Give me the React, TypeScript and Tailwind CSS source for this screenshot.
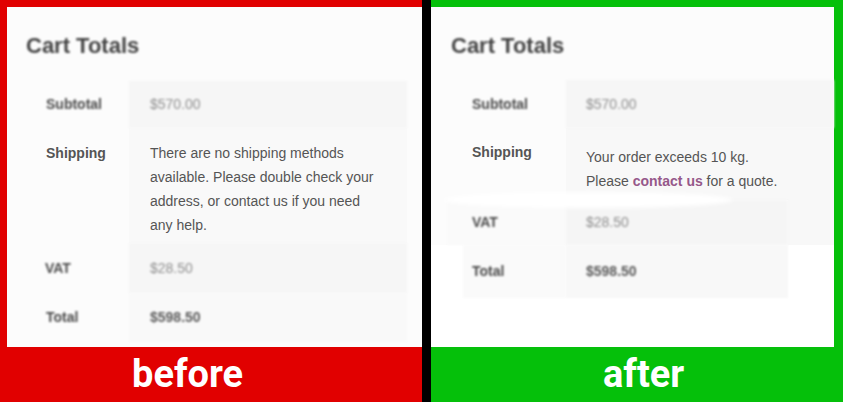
import React from "react";

const sans = { fontFamily: '"Liberation Sans", Arial, sans-serif' };
const robo = { fontFamily: 'Roboto, "Open Sans", sans-serif' };

function Heading({ pl }: { pl: string }) {
  return (
    <div className={`${pl} pt-[25px] h-[53px] text-[22px] leading-[28px] font-bold text-[#444] blur-[1px]`}>
      Cart Totals
    </div>
  );
}

export default function App() {
  return (
    <div className="flex w-[843px] h-[402px] overflow-hidden" style={sans}>
      {/* BEFORE */}
      <div className="w-[422px] bg-[#e10000] flex flex-col">
        <div className="ml-[7px] mt-[7px] h-[340px] w-[415px] bg-[#fcfcfc] flex flex-col">
          <Heading pl="pl-[19px]" />
          <div className="mt-[21px] ml-[27px] flex flex-col text-[14px]">
            <div className="flex h-[47px]">
              <div className="w-[95px] pl-[12px] flex items-center font-bold text-[#4a4a4a] blur-[1px]">Subtotal</div>
              <div className="w-[278px] pl-[21px] flex items-center bg-[#f6f6f6] text-[#8f8f8f] blur-[1px]">$570.00</div>
            </div>
            <div className="flex h-[115px]">
              <div className="w-[95px] pl-[12px] pt-[13px] leading-[24px] font-bold text-[#555]">Shipping</div>
              <div className="w-[278px] pl-[21px] pr-[26px] pt-[13px] leading-[24px] bg-[#f9f9f9] text-[#555]">
                There are no shipping methods available. Please double check your address, or contact us if you need any help.
              </div>
            </div>
            <div className="flex h-[50px]">
              <div className="w-[95px] pl-[11px] flex items-center font-bold text-[#4a4a4a] blur-[1px]">VAT</div>
              <div className="w-[278px] pl-[21px] flex items-center bg-[#f6f6f6] text-[#8f8f8f] blur-[1px]">$28.50</div>
            </div>
            <div className="flex h-[49px]">
              <div className="w-[95px] pl-[12px] flex items-center font-bold text-[#4a4a4a] blur-[1px]">Total</div>
              <div className="w-[278px] pl-[21px] flex items-center bg-[#f9f9f9] font-bold text-[#5a5a5a] blur-[1px]">$598.50</div>
            </div>
          </div>
        </div>
        <div className="flex-1 flex items-center pl-[132px] pb-[2px] text-white text-[38px] font-bold leading-none" style={robo}>
          before
        </div>
      </div>

      <div className="w-[9px] bg-black" />

      {/* AFTER */}
      <div className="w-[412px] bg-[#05c00a] flex flex-col">
        <div className="mt-[7px] h-[340px] w-[403px] bg-white flex flex-col">
          <div className="bg-[#fcfcfc]">
            <Heading pl="pl-[20px]" />
          </div>
          <div className="pt-[20px] bg-[#fcfcfc] flex flex-col text-[14px] relative">
            <div className="flex h-[48px]">
              <div className="w-[135px] pl-[41px] flex items-center font-bold text-[#4a4a4a] blur-[1px]">Subtotal</div>
              <div className="flex-1 pl-[20px] flex items-center bg-[#f6f6f6] text-[#8f8f8f] blur-[1px]">$570.00</div>
            </div>
            <div className="flex h-[72px]">
              <div className="w-[135px] pl-[41px] pt-[12px] leading-[24px] font-bold text-[#555]">Shipping</div>
              <div className="flex-1 pl-[20px] pt-[17px] leading-[24px] bg-[#f8f8f8] text-[#555]">
                Your order exceeds 10 kg.
                <br />
                Please <span className="font-bold text-[#96588a]">contact us</span> for a quote.
              </div>
            </div>
            <div className="flex h-[45px]">
              <div className="w-[16px] bg-[#fcfcfc]" />
              <div className="w-[119px] pl-[25px] flex items-center font-bold text-[#4a4a4a] bg-[#fafafa] blur-[1px]">VAT</div>
              <div className="w-[222px] pl-[20px] flex items-center bg-[#f5f5f5] text-[#8f8f8f] blur-[1px]">$28.50</div>
              <div className="flex-1 bg-[#f8f8f8]" />
            </div>
            <div className="flex h-[53px] bg-white">
              <div className="w-[32px]" />
              <div className="w-[103px] pl-[9px] flex items-center font-bold text-[#4a4a4a] bg-[#fafafa] blur-[1px]">Total</div>
              <div className="w-[222px] pl-[20px] flex items-center bg-[#f8f8f8] font-bold text-[#5a5a5a] blur-[1px]">$598.50</div>
            </div>
            <div className="absolute left-[12px] top-[132px] w-[290px] h-[16px] bg-white rounded-[50%] blur-[2px]" />
          </div>
          <div className="flex-1 bg-white" />
        </div>
        <div className="flex-1 flex items-center pl-[172px] pb-[2px] text-white text-[38px] font-bold leading-none" style={robo}>
          after
        </div>
      </div>
    </div>
  );
}
